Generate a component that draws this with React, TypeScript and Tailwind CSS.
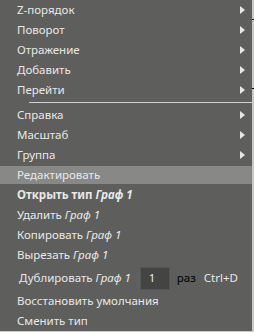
import { ReactNode } from 'react'

const font = { fontFamily: '"Noto Sans", "Open Sans", sans-serif' }

function Arrow() {
  return (
    <svg width="5" height="8" viewBox="0 0 5 8" className="absolute right-[7px] top-[6px]">
      <path d="M0 0 L5 4 L0 8 Z" fill="#e6e6e6" />
    </svg>
  )
}

function Row({ children, sub, active }: { children: ReactNode; sub?: boolean; active?: boolean }) {
  return (
    <div className="relative h-5 flex items-center">
      {active && <div className="absolute inset-x-0 top-px bottom-px bg-[#888886]" />}
      <span className="relative pl-[17px] whitespace-nowrap">{children}</span>
      {sub && <Arrow />}
    </div>
  )
}

const G = () => <i className="italic">Граф 1</i>

export default function App() {
  return (
    <div
      className="relative w-[254px] h-[332px] flex flex-col bg-[#c9c9c9] text-[11.5px] text-[#e8e8e8] leading-none"
      style={font}
    >
      <div className="flex-1 flex">
        <div className="w-[252px] bg-[#5e5e5c] flex flex-col">
          <Row sub>Z-порядок</Row>
          <Row sub>Поворот</Row>
          <Row sub>Отражение</Row>
          <Row sub>Добавить</Row>
          <Row sub>Перейти</Row>
          <div className="h-[5px] flex items-center pl-[29px]">
            <div className="h-px w-full bg-[#d2d2d2]" />
          </div>
          <Row sub>Справка</Row>
          <Row sub>Масштаб</Row>
          <Row sub>Группа</Row>
          <Row active>Редактировать</Row>
          <Row>
            <b className="font-bold">
              Открыть тип <i className="italic">Граф 1</i>
            </b>
          </Row>
          <Row>
            Удалить <G />
          </Row>
          <Row>
            Копировать <G />
          </Row>
          <Row>
            Вырезать <G />
          </Row>
          <div className="h-[26px] flex items-center pl-[19px] whitespace-nowrap">
            <span>
              Дублировать <G />
            </span>
            <div className="ml-[9px] w-[30px] h-[23px] bg-[#444442] border border-[#555553] flex items-center pl-[8px]">
              1
            </div>
            <span className="ml-[7px] text-black">раз</span>
            <span className="ml-[8px]">Ctrl+D</span>
          </div>
          <Row>Восстановить умолчания</Row>
          <Row>Сменить тип</Row>
        </div>
        <div className="flex-1" />
      </div>
      <div className="h-[1px]" />
      <div className="absolute right-0 top-[19px] w-[2px] h-px bg-black" />
      <div className="absolute right-0 top-[88px] w-[2px] h-px bg-black" />
    </div>
  )
}
